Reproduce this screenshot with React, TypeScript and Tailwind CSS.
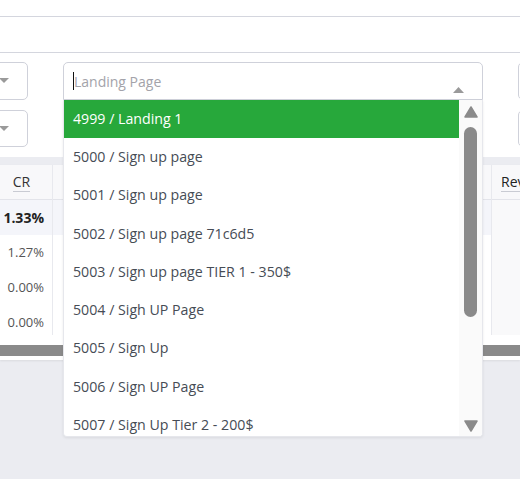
import { useState } from 'react';

const options = [
  '4999 / Landing 1',
  '5000 / Sign up page',
  '5001 / Sign up page',
  '5002 / Sign up page 71c6d5',
  '5003 / Sign up page TIER 1 - 350$',
  '5004 / Sigh UP Page',
  '5005 / Sign Up',
  '5006 / Sign UP Page',
  '5007 / Sign Up Tier 2 - 200$',
];

const rows = [
  { cr: '1.33%', total: true },
  { cr: '1.27%' },
  { cr: '0.00%' },
  { cr: '0.00%' },
];

const CaretDown = () => (
  <svg width="10" height="6" viewBox="0 0 10 6">
    <path d="M0 0 L10 0 L5 5 Z" fill="#9a9a9a" />
  </svg>
);

const App = () => {
  const [active] = useState(0);

  return (
    <div
      className="w-[520px] h-[479px] overflow-hidden bg-[#ebecf1] text-[#333]"
      style={{ fontFamily: '"Open Sans", "Noto Sans", sans-serif' }}
    >
      {/* header bars */}
      <div className="h-[17px] bg-white border-b border-[#d4d6de]" />
      <div className="h-[36px] bg-white border-b border-[#d4d6de]" />

      {/* filters */}
      <div className="h-[104px] bg-white pt-[9px] flex gap-[35px] -ml-[172px]">
        <div className="w-[200px] shrink-0 flex flex-col gap-[10px]">
          <div className="h-[38px] border border-[#cfd1da] rounded-[5px] flex items-center justify-end pr-[18px]">
            <CaretDown />
          </div>
          <div className="h-[37px] border border-[#cfd1da] rounded-[5px] flex items-center justify-end pr-[18px]">
            <CaretDown />
          </div>
        </div>

        <div className="relative w-[420px] shrink-0">
          <div className="h-[38px] border border-[#cfd1da] rounded-t-[5px] flex items-center pl-[9px] pr-[19px] relative">
            <span className="w-px h-[18px] bg-[#111]" />
            <span className="text-[14px] text-[#a3a3aa]">Landing Page</span>
            <svg className="absolute right-[18px] top-[24px]" width="11" height="6" viewBox="0 0 11 6">
              <path d="M0 6 L11 6 L5.5 0 Z" fill="#9a9a9a" />
            </svg>
          </div>

          {/* dropdown list */}
          <div className="absolute z-10 left-0 top-[38px] w-[420px] h-[337px] bg-white rounded-b-[4px] shadow-[0_1px_3px_rgba(0,0,0,0.08)] border-x border-b border-[#e6e7ec] flex overflow-hidden">
            <div className="flex-1 flex flex-col">
              {options.map((o, i) => (
                <div
                  key={o}
                  className={`h-[38.25px] shrink-0 flex items-center pl-[9px] pb-[1px] text-[14.2px] ${
                    i === active ? 'bg-[#27a83b] text-white' : 'text-[#464c55]'
                  }`}
                >
                  {o}
                </div>
              ))}
            </div>
            <div className="w-[23px] bg-[#fafafa] flex flex-col items-center pt-[6px] pb-[4px]">
              <svg width="14" height="12" viewBox="0 0 14 12">
                <path d="M7 1 L13 11 L1 11 Z" fill="#8a8a8a" stroke="#8a8a8a" strokeWidth="1.5" strokeLinejoin="round" />
              </svg>
              <div className="mt-[9px] w-[13px] h-[190px] rounded-full bg-[#8a8a8a]" />
              <div className="flex-1" />
              <svg width="14" height="12" viewBox="0 0 14 12">
                <path d="M1 1 L13 1 L7 11 Z" fill="#8a8a8a" stroke="#8a8a8a" strokeWidth="1.5" strokeLinejoin="round" />
              </svg>
            </div>
          </div>
        </div>

        <div className="w-[200px] shrink-0 flex flex-col gap-[10px]">
          <div className="h-[38px] border border-[#cfd1da] rounded-[5px]" />
          <div className="h-[37px] border border-[#cfd1da] rounded-[5px]" />
        </div>
      </div>

      {/* table card */}
      <div className="mt-[8px] h-[195px] bg-white shadow-[0_1px_2px_rgba(0,0,0,0.08)] flex flex-col">
        <div className="flex text-[13px]">
          <div className="w-[53px] shrink-0 border-r border-[#e8e9ee]">
            <div className="h-[35px] bg-[#f8f8fa] border-b border-[#e3e4ea] flex items-center justify-center pr-[9px] pt-[1px]">
              <span className="border-b border-[#c9cbd3] leading-[18px] text-[14px] text-[#333]">CR</span>
            </div>
            <div className="h-[135px] overflow-hidden">
              {rows.map((r, i) => (
                <div
                  key={i}
                  className={`h-[35px] flex items-center justify-end pr-[8px] ${
                    r.total ? 'bg-[#f4f5fa] font-bold text-[14px] text-[#222]' : 'bg-white text-[#555]'
                  }`}
                >
                  {r.cr}
                </div>
              ))}
            </div>
          </div>
          <div className="w-[439px] shrink-0 border-r border-[#e8e9ee]">
            <div className="h-[35px] bg-[#f8f8fa] border-b border-[#e3e4ea]" />
            <div className="h-[35px] bg-[#f4f5fa]" />
            <div className="h-[100px] bg-white" />
          </div>
          <div className="flex-1 overflow-hidden">
            <div className="h-[35px] bg-[#f8f8fa] border-b border-[#e3e4ea] flex items-center pl-[9px] pt-[1px]">
              <span className="border-b border-[#c9cbd3] leading-[18px] text-[14px] text-[#222]">Rev</span>
            </div>
            <div className="h-[135px] bg-[#f9f9fa]" />
          </div>
        </div>
        <div className="h-[10px] bg-white" />
        <div className="h-[11px] bg-[#8a8a8a]" />
      </div>
    </div>
  );
};

export default App;
